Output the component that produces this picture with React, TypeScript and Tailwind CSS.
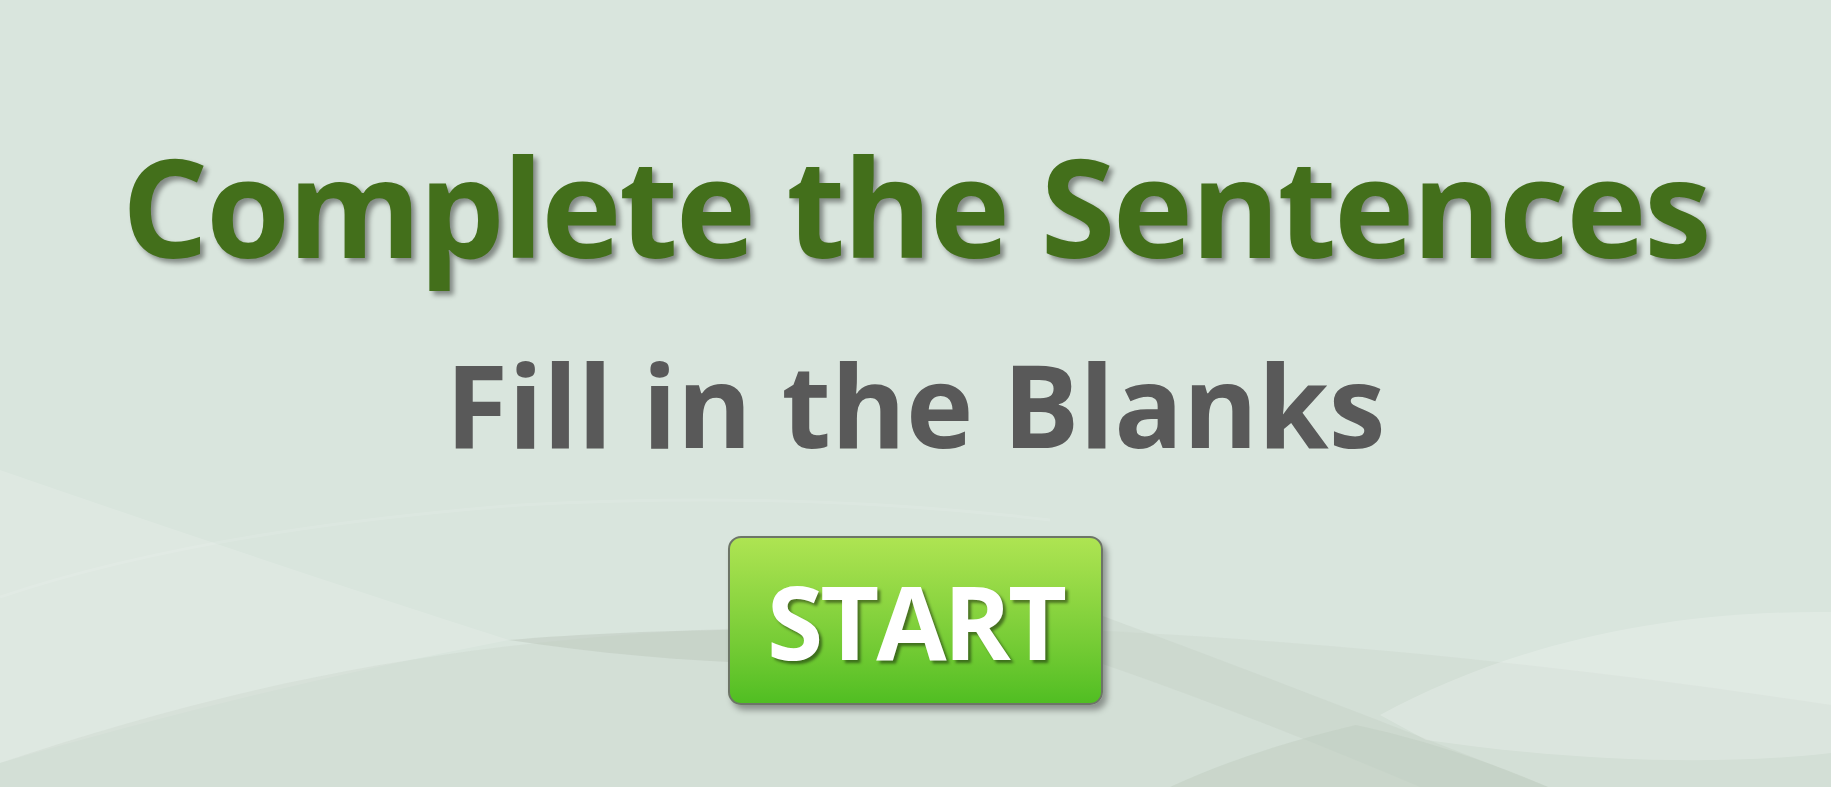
// Intro screen for the "Complete the Sentences" exercise: title, subtitle and
// a big green START button on a soft wavy background.

function Waves() {
  return (
    <svg
      className="pointer-events-none absolute inset-0 h-full w-full"
      viewBox="0 0 1831 787"
      preserveAspectRatio="none"
    >
      {/* lighter wedge on the left */}
      <path d="M0,470 Q260,560 509,640 Q250,690 0,763 Z" fill="#ffffff" fillOpacity="0.14" />
      <path d="M0,597 Q200,530 520,505 Q800,490 1050,520" fill="none" stroke="#ffffff" strokeOpacity="0.1" strokeWidth="3" />
      {/* big arc, darker below */}
      <path
        d="M0,763 C220,690 420,645 700,630 C1000,615 1400,640 1831,705 L1831,787 L0,787 Z"
        fill="#c6d2c7"
        fillOpacity="0.3"
      />
      {/* dark swoosh behind the button */}
      <path
        d="M509,640 C650,628 850,624 1098,640 L1098,660 C900,668 720,672 509,640 Z"
        fill="#bfcbbf"
        fillOpacity="0.55"
      />
      {/* bottom dark band */}
      <path d="M1100,615 Q1330,700 1548,787 L1420,787 Q1250,715 1100,663 Z" fill="#c2cec3" fillOpacity="0.35" />
      <path d="M1356,725 Q1250,750 1170,787 L1548,787 Q1450,745 1356,725 Z" fill="#bfcbbf" fillOpacity="0.45" />
      {/* light lens on the right */}
      <path
        d="M1380,715 C1500,650 1650,610 1831,612 L1831,753 C1700,768 1550,758 1426,740 Z"
        fill="#ffffff"
        fillOpacity="0.2"
      />
    </svg>
  );
}

export default function App() {
  return (
    <div
      className="relative h-[787px] w-full overflow-hidden bg-[#d9e5dd]"
      style={{ fontFamily: '"Open Sans", "Liberation Sans", sans-serif' }}
    >
      <Waves />
      <div className="relative flex flex-col items-center pt-[138px]">
        <h1 className="text-[136px] font-bold leading-none tracking-[-2.5px] text-[#436f1b] [text-shadow:4px_4px_5px_rgba(0,0,0,0.4)]">
          Complete the Sentences
        </h1>
        <h2 className="mt-[73px] text-[114px] font-bold leading-none text-[#595959]">
          Fill in the Blanks
        </h2>
        <button className="mt-[75px] flex h-[169px] w-[375px] items-center justify-center rounded-[13px] border-2 border-[#6d7567] bg-gradient-to-b from-[#aee452] to-[#50be22] shadow-[4px_5px_6px_rgba(0,0,0,0.35)]">
          <span className="text-[102px] font-bold leading-none tracking-[-3px] text-white [text-shadow:3px_3px_3px_rgba(0,0,0,0.45)]">
            START
          </span>
        </button>
      </div>
    </div>
  );
}
